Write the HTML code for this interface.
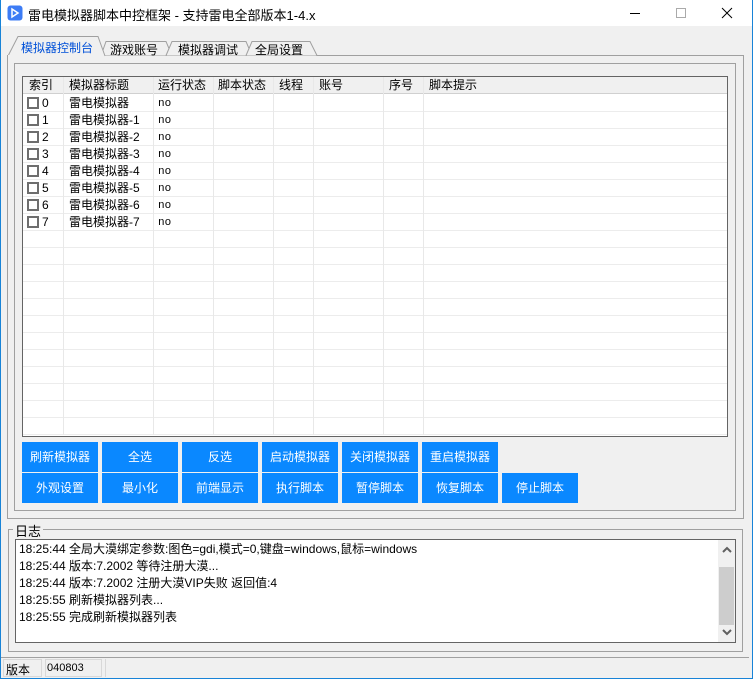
<!DOCTYPE html>
<html><head><meta charset="utf-8"><style>
*{box-sizing:border-box;margin:0;padding:0}
body{width:753px;height:679px;overflow:hidden;background:#f0f0f0;font-family:"Liberation Sans","Noto Sans CJK SC",sans-serif;font-size:12px;color:#000;position:relative}
.a{position:absolute}
.win{left:0;top:0;width:753px;height:679px;border:1px solid #1883d7;border-top:none}
.title{left:0;top:0;width:753px;height:26px;background:#fff}
.list{left:22px;top:76px;width:706px;height:361px;background:#fff;border:1px solid #646464}
.hdr{left:0;top:0;height:17px;width:704px;background:#f0f0f0;border-bottom:1px solid #d0d0d0}
.btn{background:#0a88ff;color:#fff;text-align:center;line-height:30px;width:76px;height:30px;font-size:12px}
.mono{font-family:"Liberation Mono",monospace;font-size:11px}
.cb{width:12px;height:12px;border:2px solid #6e6e6e;background:#fff}
.r{line-height:17px;height:17px}
</style></head><body>
<div class="a title"></div>
<svg class="a" style="left:7px;top:5px" width="16" height="16"><rect x="0.5" y="0.5" width="15" height="15" rx="3" fill="#3d7cf5"/><path d="M5 4 L11 8 L5 12 Z" fill="none" stroke="#fff" stroke-width="1.5"/></svg>
<div class="a" style="left:28px;top:5px;font-size:13px">雷电模拟器脚本中控框架 - 支持雷电全部版本1-4.x</div>
<div class="a" style="left:630px;top:13px;width:10px;height:1px;background:#000"></div>
<div class="a" style="left:676px;top:8px;width:10px;height:10px;border:1px solid #aaa"></div>
<svg class="a" style="left:721px;top:7px" width="12" height="12"><path d="M1 1L11 11M11 1L1 11" stroke="#000" stroke-width="1"/></svg>
<div class="a win"></div>
<div class="a" style="left:7px;top:55px;width:737px;height:464px;border:1px solid #a0a0a0"></div>
<svg class="a" style="left:6px;top:34px" width="320" height="23">
<path d="M95 21.5 L100 7.5 L160 7.5 L166 21.5" fill="#f0f0f0" stroke="#a0a0a0"/>
<path d="M160 21.5 L166 7.5 L240 7.5 L246 21.5" fill="#f0f0f0" stroke="#a0a0a0"/>
<path d="M240 21.5 L246 7.5 L304 7.5 L311 21.5" fill="#f0f0f0" stroke="#a0a0a0"/>
<path d="M2 22 L12 2.5 L92 2.5 L99 22" fill="#f0f0f0" stroke="#a0a0a0"/>
<rect x="2" y="21" width="96" height="2" fill="#f0f0f0"/>
</svg>
<div class="a" style="left:21px;top:39px;color:#0050d8">模拟器控制台</div>
<div class="a" style="left:110px;top:41px">游戏账号</div>
<div class="a" style="left:178px;top:41px">模拟器调试</div>
<div class="a" style="left:255px;top:41px">全局设置</div>
<div class="a" style="left:14px;top:63px;width:722px;height:448px;border:1px solid #a0a0a0"></div>
<div class="a list">
<div class="a hdr"></div>
<div class="a" style="left:0;top:0;width:704px;height:358px;background:
repeating-linear-gradient(to bottom,transparent 0,transparent 16px,#ececec 16px,#ececec 17px);background-position:0 18px;background-repeat:no-repeat;background-size:704px 340px;"></div>
<div class="a" style="left:40px;top:0;width:1px;height:358px;background:#e8e8e8"></div>
<div class="a" style="left:130px;top:0;width:1px;height:358px;background:#e8e8e8"></div>
<div class="a" style="left:190px;top:0;width:1px;height:358px;background:#e8e8e8"></div>
<div class="a" style="left:250px;top:0;width:1px;height:358px;background:#e8e8e8"></div>
<div class="a" style="left:290px;top:0;width:1px;height:358px;background:#e8e8e8"></div>
<div class="a" style="left:360px;top:0;width:1px;height:358px;background:#e8e8e8"></div>
<div class="a" style="left:400px;top:0;width:1px;height:358px;background:#e8e8e8"></div>
<div class="a r" style="left:6px;top:0">索引</div>
<div class="a r" style="left:46px;top:0">模拟器标题</div>
<div class="a r" style="left:135px;top:0">运行状态</div>
<div class="a r" style="left:195px;top:0">脚本状态</div>
<div class="a r" style="left:256px;top:0">线程</div>
<div class="a r" style="left:296px;top:0">账号</div>
<div class="a r" style="left:366px;top:0">序号</div>
<div class="a r" style="left:406px;top:0">脚本提示</div>
</div>
<div id="rows"></div>
<script>
var h='';for(var i=0;i<8;i++){var y=95+i*17;
h+='<div class="a cb" style="left:27px;top:'+(y+2)+'px"></div><div class="a r" style="left:42px;top:'+y+'px">'+i+'</div><div class="a r" style="left:69px;top:'+y+'px">雷电模拟器'+(i?'-'+i:'')+'</div><div class="a mono r" style="left:158px;top:'+(y+1)+'px">no</div>';}
document.getElementById('rows').innerHTML=h;
</script>
<div class="a btn" style="left:22px;top:442px">刷新模拟器</div>
<div class="a btn" style="left:102px;top:442px">全选</div>
<div class="a btn" style="left:182px;top:442px">反选</div>
<div class="a btn" style="left:262px;top:442px">启动模拟器</div>
<div class="a btn" style="left:342px;top:442px">关闭模拟器</div>
<div class="a btn" style="left:422px;top:442px">重启模拟器</div>
<div class="a btn" style="left:22px;top:473px">外观设置</div>
<div class="a btn" style="left:102px;top:473px">最小化</div>
<div class="a btn" style="left:182px;top:473px">前端显示</div>
<div class="a btn" style="left:262px;top:473px">执行脚本</div>
<div class="a btn" style="left:342px;top:473px">暂停脚本</div>
<div class="a btn" style="left:422px;top:473px">恢复脚本</div>
<div class="a btn" style="left:502px;top:473px">停止脚本</div>
<div class="a" style="left:8px;top:529px;width:735px;height:123px;border:1px solid #a0a0a0"></div>
<div class="a" style="left:13px;top:521px;background:#f0f0f0;padding:0 2px;font-size:13px">日志</div>
<div class="a" style="left:15px;top:539px;width:721px;height:104px;background:#fff;border:1px solid #646464;font-size:12px;line-height:17px;padding:1px 0 0 3px">
18:25:44 全局大漠绑定参数:图色=gdi,模式=0,键盘=windows,鼠标=windows<br>18:25:44 版本:7.2002 等待注册大漠...<br>18:25:44 版本:7.2002 注册大漠VIP失败 返回值:4<br>18:25:55 刷新模拟器列表...<br>18:25:55 完成刷新模拟器列表
<div class="a" style="left:702px;top:0;width:17px;height:102px;background:#f0f0f0"></div>
<div class="a" style="left:703px;top:27px;width:15px;height:58px;background:#cdcdcd"></div>
<svg class="a" style="left:705px;top:6px" width="12" height="8"><path d="M2 6L6 2L10 6" fill="none" stroke="#606060" stroke-width="2"/></svg>
<svg class="a" style="left:705px;top:88px" width="12" height="8"><path d="M2 2L6 6L10 2" fill="none" stroke="#606060" stroke-width="2"/></svg>
</div>
<div class="a" style="left:1px;top:657px;width:748px;height:1px;background:#a0a0a0"></div>
<div class="a" style="left:3px;top:659px;width:39px;height:18px;border:1px solid #d8d8d8;padding:1px 2px">版本</div>
<div class="a" style="left:45px;top:659px;width:57px;height:18px;border:1px solid #d8d8d8;padding:2px 1px;font-size:11px">040803</div>
<div class="a" style="left:105px;top:659px;width:643px;height:18px;border-left:1px solid #d8d8d8"></div>
</body></html>
